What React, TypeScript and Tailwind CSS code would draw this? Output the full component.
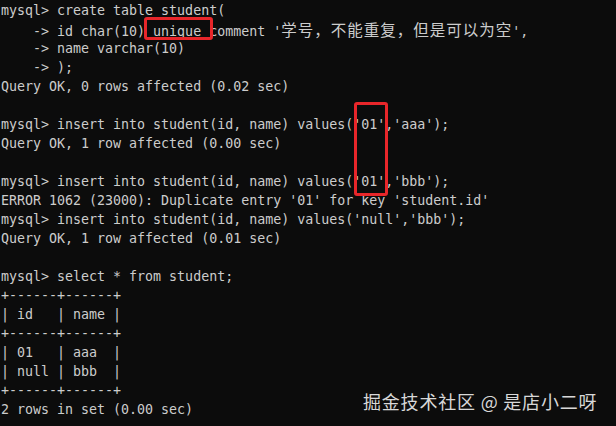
import React from "react";

const lines: string[] = [
  "mysql> create table student(",
  "    -> id char(10) unique comment '@@',",
  "    -> name varchar(10)",
  "    -> );",
  "Query OK, 0 rows affected (0.02 sec)",
  "",
  "mysql> insert into student(id, name) values('01','aaa');",
  "Query OK, 1 row affected (0.00 sec)",
  "",
  "mysql> insert into student(id, name) values('01','bbb');",
  "ERROR 1062 (23000): Duplicate entry '01' for key 'student.id'",
  "mysql> insert into student(id, name) values('null','bbb');",
  "Query OK, 1 row affected (0.01 sec)",
  "",
  "mysql> select * from student;",
  "+------+------+",
  "| id   | name |",
  "+------+------+",
  "| 01   | aaa  |",
  "| null | bbb  |",
  "+------+------+",
  "2 rows in set (0.00 sec)",
];

const Line = ({ text }: { text: string }) => {
  if (text.includes("@@")) {
    const [a, b] = text.split("@@");
    return (
      <div className="h-[19px] leading-[19px] whitespace-pre">
        {a}
        <span className="font-['Noto_Sans_CJK_SC',sans-serif] text-[15.5px] tracking-[1px]">
          学号，不能重复，但是可以为空
        </span>
        {b}
      </div>
    );
  }
  return <div className="h-[19px] leading-[19px] whitespace-pre">{text}</div>;
};

export default function App() {
  return (
    <div className="relative w-[616px] h-[426px] bg-[#0c0c0c] overflow-hidden">
      <div className="pl-[1px] pt-[1px] font-['DejaVu_Sans_Mono',monospace] text-[13.3px] text-[#cccccc]">
        {lines.map((l, i) => (
          <Line key={i} text={l} />
        ))}
      </div>
      <div className="absolute left-[144px] top-[17px] w-[69px] h-[23px] border-[3px] border-[#e8262a] rounded-[3px]" />
      <div className="absolute left-[354px] top-[102px] w-[34px] h-[94px] border-[3px] border-[#e8262a] rounded-[3px]" />
      <div className="absolute left-[363px] top-[389px] font-['Noto_Sans_CJK_SC',sans-serif] text-[18px] tracking-[0.8px] leading-[24px] text-[#d8d8d8] whitespace-pre">
        掘金技术社区 @ 是店小二呀
      </div>
    </div>
  );
}
